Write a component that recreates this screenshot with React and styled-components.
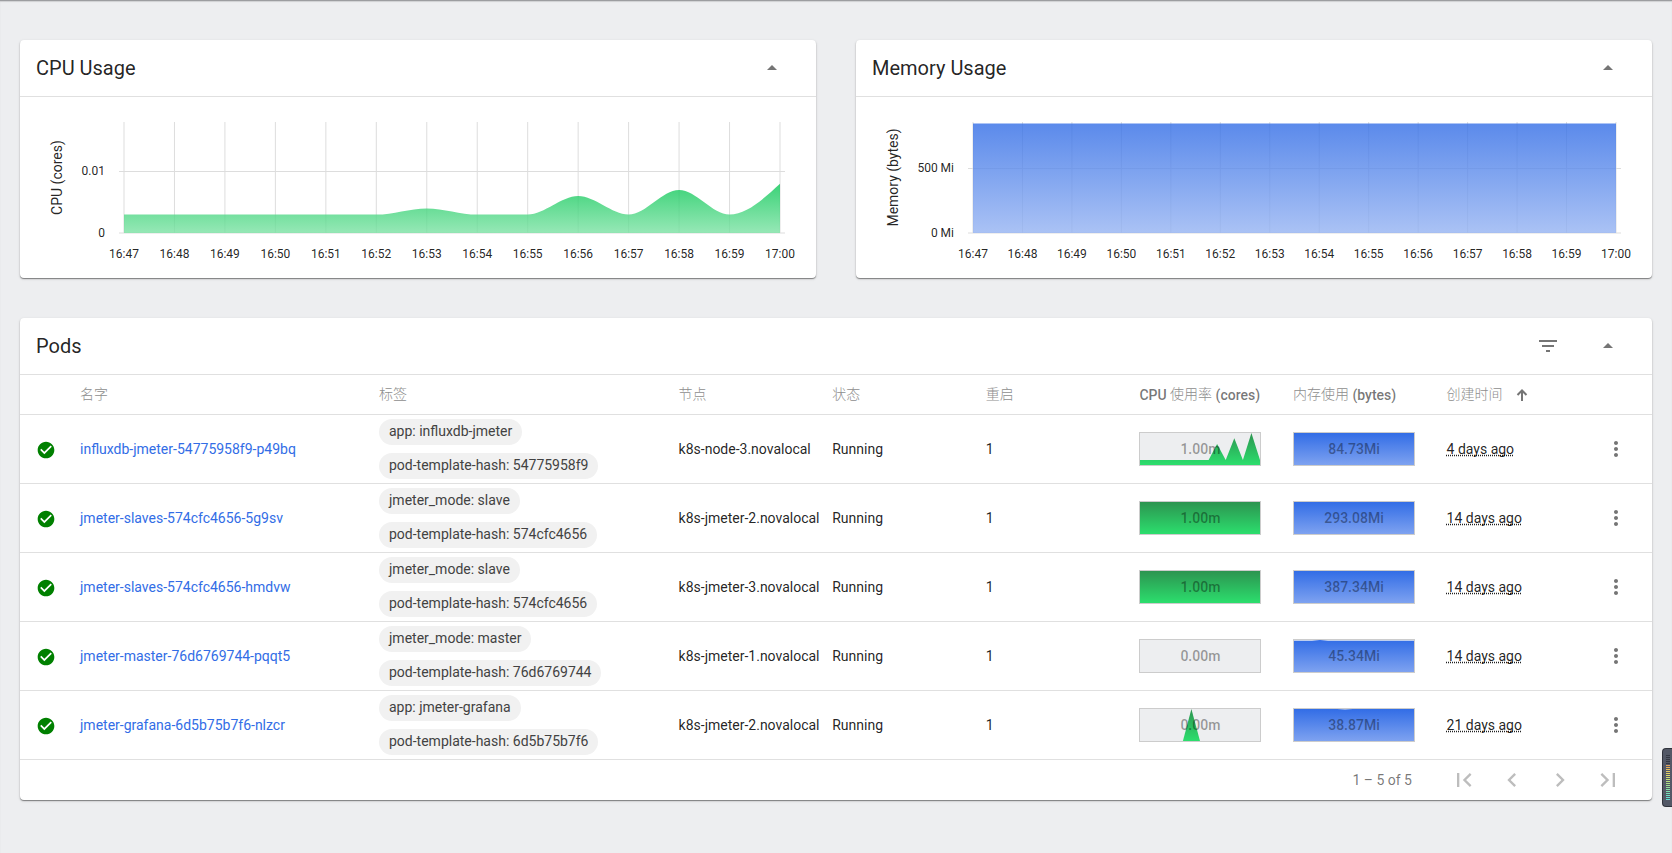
import React from 'react';
import styled, { createGlobalStyle } from 'styled-components';

const GlobalStyle = createGlobalStyle`
  body {
    margin: 0;
    background-color: #edeef0;
    color: rgba(0, 0, 0, 0.87);
    font-family: Roboto, "Noto Sans CJK SC", sans-serif;
    font-size: 14px;
    overflow: hidden;
  }
`

const Page = styled.div`
  box-sizing: border-box;
  height: 853px;
  padding: 40px 20px 0;
  box-shadow: inset 0 1px 0 #9c9da0, inset 0 2px 1px #cfd0d2;
`

const Charts = styled.div`
  display: grid;
  grid-template-columns: 1fr 1fr;
  gap: 40px;
  margin-bottom: 40px;
`

const Card = styled.section`
  background-color: white;
  border-radius: 4px;
  box-shadow: 0 1px 1px rgba(0, 0, 0, 0.4), 0 1px 3px rgba(0, 0, 0, 0.16);
`

const CardHeader = styled.header`
  display: flex;
  align-items: center;
  height: 56px;
  padding: 0 32px 0 16px;
  border-bottom: 1px solid #e0e0e0;
`

const Title = styled.h2`
  flex: 1;
  margin: 0;
  font-size: 20px;
  font-weight: 400;
  line-height: 24px;
`

const HeaderIcon = styled.svg`
  display: block;
  width: 24px;
  height: 24px;
  margin-left: 36px;
  fill: #757575;
`

const ChartSvg = styled.svg`
  display: block;
  width: 796px;
  height: 181px;
`

const Tick = styled.text`
  fill: rgba(0, 0, 0, 0.87);
  font-size: 12px;
`

const AxisTitle = styled.text`
  fill: rgba(0, 0, 0, 0.87);
  font-size: 14px;
  text-anchor: middle;
`

const Row = styled.div`
  box-sizing: border-box;
  display: grid;
  grid-template-columns: 60px 299px 299.6px repeat(6, 153.6px) 1fr;
  align-items: center;
  height: ${props => props.$head ? 40 : 69}px;
  border-bottom: 1px solid #e0e0e0;
  color: ${props => props.$head ? "rgba(0, 0, 0, 0.54)" : "inherit"};
  font-weight: ${props => props.$head ? 500 : 400};
  white-space: nowrap;
`

const HeadCell = styled.div`
  display: flex;
  align-items: center;
`

const Han = styled.span`
  padding-bottom: 3px;
  color: #8e8e8e;
  font-family: "Noto Sans CJK SC", sans-serif;
  font-weight: 300;
  line-height: 20px;
`

const SortIcon = styled.svg`
  width: 12px;
  height: 12px;
  margin-left: 13px;
  fill: none;
  stroke: #757575;
  stroke-width: 2;
`

const StatusIcon = styled.svg`
  display: block;
  width: 20px;
  height: 20px;
  margin: 2px 0 0 16px;
  fill: #008000;
`

const PodLink = styled.a`
  color: #326de6;
`

const Chips = styled.div`
  display: flex;
  flex-direction: column;
  align-items: flex-start;
  gap: 8px;
`

const Chip = styled.span`
  height: 26px;
  padding: 0 10px;
  border-radius: 13px;
  background-color: #f1f1f1;
  color: #424242;
  line-height: 25px;
`

const Spark = styled.div`
  position: relative;
  box-sizing: border-box;
  width: 122px;
  height: 34px;
  border: 1px solid #cccccc;
  background-color: #edeef0;
`

const SparkSvg = styled.svg`
  display: block;
  width: 120px;
  height: 32px;
`

const SparkValue = styled.span`
  position: absolute;
  inset: 0;
  color: rgba(0, 0, 0, 0.38);
  font-weight: 500;
  line-height: 32px;
  text-align: center;
`

const Age = styled.span`
  text-decoration: underline dotted;
  text-decoration-skip-ink: none;
`

const MenuIcon = styled.svg`
  display: block;
  width: 24px;
  height: 24px;
  margin-left: 4px;
  fill: #757575;
`

const Pager = styled.footer`
  display: flex;
  align-items: center;
  justify-content: flex-end;
  height: 40px;
  padding-right: 30px;
  color: rgba(0, 0, 0, 0.54);
`

const PagerIcon = styled.svg`
  width: 28px;
  height: 28px;
  margin-left: 20px;
  fill: #bdbdbd;

  &:first-of-type {
    margin-left: 38px;
  }
`

const Meter = styled.div`
  position: absolute;
  box-sizing: border-box;
  top: 748px;
  right: 0;
  width: 10px;
  height: 59px;
  padding: 6px 0 0 3px;
  border: 1px solid #30333c;
  border-right: none;
  border-radius: 4px 0 0 4px;
  background-color: #535866;
`

const MeterBar = styled.div`
  height: 1px;
  margin-bottom: 1px;
  width: 4px;
  background-color: ${props => props.color};
`

const TIMES = [
  "16:47", "16:48", "16:49", "16:50", "16:51", "16:52", "16:53",
  "16:54", "16:55", "16:56", "16:57", "16:58", "16:59", "17:00"
]

const CPU = [3, 3, 3, 3, 3, 3, 4, 3, 3, 6, 3, 7, 3, 8]
const MEMORY = [842, 842, 842, 842, 842, 842, 842, 842, 842, 842, 842, 842, 842, 842]

const FULL = "0,0 120,0 120,32 0,32"

const PODS = [
  {
    name: "influxdb-jmeter-54775958f9-p49bq",
    labels: ["app: influxdb-jmeter", "pod-template-hash: 54775958f9"],
    node: "k8s-node-3.novalocal",
    cpu: "1.00m",
    cpuShape: "0,27 68.6,27 77.1,11 85.7,27 94.3,5.3 102.9,27 111.4,0 120,27 120,32 0,32",
    memory: "84.73Mi",
    age: "4 days ago"
  },
  {
    name: "jmeter-slaves-574cfc4656-5g9sv",
    labels: ["jmeter_mode: slave", "pod-template-hash: 574cfc4656"],
    node: "k8s-jmeter-2.novalocal",
    cpu: "1.00m",
    cpuShape: FULL,
    memory: "293.08Mi",
    age: "14 days ago"
  },
  {
    name: "jmeter-slaves-574cfc4656-hmdvw",
    labels: ["jmeter_mode: slave", "pod-template-hash: 574cfc4656"],
    node: "k8s-jmeter-3.novalocal",
    cpu: "1.00m",
    cpuShape: FULL,
    memory: "387.34Mi",
    age: "14 days ago"
  },
  {
    name: "jmeter-master-76d6769744-pqqt5",
    labels: ["jmeter_mode: master", "pod-template-hash: 76d6769744"],
    node: "k8s-jmeter-1.novalocal",
    cpu: "0.00m",
    cpuShape: "",
    memory: "45.34Mi",
    memoryShape: "0,0.7 18,0.7 26,0 34,0.7 120,0.7 120,32 0,32",
    age: "14 days ago"
  },
  {
    name: "jmeter-grafana-6d5b75b7f6-nlzcr",
    labels: ["app: jmeter-grafana", "pod-template-hash: 6d5b75b7f6"],
    node: "k8s-jmeter-2.novalocal",
    cpu: "0.00m",
    cpuShape: "42.9,32 51.4,0 60,32",
    memory: "38.87Mi",
    memoryShape: "0,0 43,0 51,0.6 59,0 120,0 120,32 0,32",
    age: "21 days ago"
  }
]

const METER_COLORS = [
  "#343843", "#343843", "#343843", "#343843", "#343843",
  "#e0a05c", "#e3b05c", "#e3bd5f", "#e2c962", "#e0d266", "#d9d86b", "#cfdb70",
  "#c3dd76", "#b6de7d", "#aadf85", "#9ddf8e", "#91df98", "#86dfa3",
  "#7cdfae", "#74dfb8", "#6cdfc2", "#66dfcb", "#60dfd3"
]

// Monotone cubic through evenly spaced points
function curve(points) {
  const slopes = points.map((p, i) => {
    if (i === 0) return 0
    const before = points[i][1] - points[i - 1][1]
    if (i === points.length - 1) return before * 1.5
    const after = points[i + 1][1] - points[i][1]
    return before * after <= 0 ? 0 : (before + after) / 2
  })
  return points.map(([x, y], i) => {
    if (i === 0) return `M${x},${y}`
    const [px, py] = points[i - 1]
    const dx = (x - px) / 3
    return `C${px + dx},${py + slopes[i - 1] / 3} ${x - dx},${y - slopes[i] / 3} ${x},${y}`
  }).join(" ")
}

function Chart({ id, title, titleX, left, right, values, unit, ticks, colors }) {
  const base = 136
  const step = (right - left) / (values.length - 1)
  const points = values.map((value, i) => [left + i * step, base - value * unit])
  const top = Math.min(...points.map(point => point[1]))

  return (
    <ChartSvg>
      <defs>
        <linearGradient id={id} gradientUnits="userSpaceOnUse" x1="0" y1={top} x2="0" y2={base}>
          <stop offset="0" stopColor={colors[0]} />
          <stop offset="1" stopColor={colors[1]} />
        </linearGradient>
      </defs>
      <g stroke="#dddddd">
        {points.map(([x]) => <line key={x} x1={x} x2={x} y1="25" y2={base} />)}
        {ticks.map(tick => (
          <line key={tick.label} x1={left - 5} x2={right + 5} y1={tick.y} y2={tick.y} />
        ))}
      </g>
      <path d={`${curve(points)} V${base} H${left} Z`} fill={`url(#${id})`} fillOpacity="0.8" />
      {ticks.map(tick => (
        <Tick key={tick.label} x={left - 19} y={Math.floor(tick.y) + 4} textAnchor="end">{tick.label}</Tick>
      ))}
      {points.map(([x], i) => (
        <Tick key={TIMES[i]} x={x} y="161" textAnchor="middle">{TIMES[i]}</Tick>
      ))}
      <AxisTitle transform={`translate(${titleX}, 80.5) rotate(-90)`}>{title}</AxisTitle>
    </ChartSvg>
  )
}

function Sparkline({ id, shape, colors, value }) {
  return (
    <Spark>
      <SparkSvg viewBox="0 0 120 32">
        <defs>
          <linearGradient id={id} gradientUnits="userSpaceOnUse" x1="0" y1="0" x2="0" y2="32">
            <stop offset="0" stopColor={colors[0]} />
            <stop offset="1" stopColor={colors[1]} />
          </linearGradient>
        </defs>
        <polygon points={shape} fill={`url(#${id})`} />
      </SparkSvg>
      <SparkValue>{value}</SparkValue>
    </Spark>
  )
}

const Collapse = () => (
  <HeaderIcon viewBox="0 0 24 24"><path d="M7 14l5-5 5 5z" /></HeaderIcon>
)

function App() {
  return (
    <Page>
      <GlobalStyle />
      <Charts>
        <Card>
          <CardHeader>
            <Title>CPU Usage</Title>
            <Collapse />
          </CardHeader>
          <Chart
            id="cpu-area"
            title="CPU (cores)"
            titleX={41.5}
            left={104}
            right={760}
            values={CPU}
            unit={6.15}
            ticks={[{ label: "0.01", y: 74.5 }, { label: "0", y: 136 }]}
            colors={["#0bc756", "#7ce2a4"]}
          />
        </Card>
        <Card>
          <CardHeader>
            <Title>Memory Usage</Title>
            <Collapse />
          </CardHeader>
          <Chart
            id="memory-area"
            title="Memory (bytes)"
            titleX={41.5}
            left={117}
            right={760}
            values={MEMORY}
            unit={0.13}
            ticks={[{ label: "500 Mi", y: 71.5 }, { label: "0 Mi", y: 136 }]}
            colors={["#326de6", "#95b3f2"]}
          />
        </Card>
      </Charts>
      <Card>
        <CardHeader>
          <Title>Pods</Title>
          <HeaderIcon viewBox="0 0 24 24">
            <path d="M10 18h4v-2h-4v2zM3 6v2h18V6H3zm3 7h12v-2H6v2z" />
          </HeaderIcon>
          <Collapse />
        </CardHeader>
        <Row $head>
          <span />
          <HeadCell><Han>名字</Han></HeadCell>
          <HeadCell><Han>标签</Han></HeadCell>
          <HeadCell><Han>节点</Han></HeadCell>
          <HeadCell><Han>状态</Han></HeadCell>
          <HeadCell><Han>重启</Han></HeadCell>
          <HeadCell>CPU&nbsp;<Han>使用率</Han>&nbsp;(cores)</HeadCell>
          <HeadCell><Han>内存使用</Han>&nbsp;(bytes)</HeadCell>
          <HeadCell>
            <Han>创建时间</Han>
            <SortIcon viewBox="0 0 12 12"><path d="M6 12V2M1.5 6L6 1.5 10.5 6" /></SortIcon>
          </HeadCell>
        </Row>
        {PODS.map((pod, i) => (
          <Row key={pod.name}>
            <StatusIcon viewBox="0 0 24 24">
              <path d="M12 2C6.48 2 2 6.48 2 12s4.48 10 10 10 10-4.48 10-10S17.52 2 12 2zm-2 15l-5-5 1.41-1.41L10 14.17l7.59-7.59L19 8l-9 9z" />
            </StatusIcon>
            <PodLink>{pod.name}</PodLink>
            <Chips>
              {pod.labels.map(label => <Chip key={label}>{label}</Chip>)}
            </Chips>
            <span>{pod.node}</span>
            <span>Running</span>
            <span>1</span>
            <Sparkline id={`pod-cpu-${i}`} shape={pod.cpuShape} colors={["#2c9450", "#2cde6d"]} value={pod.cpu} />
            <Sparkline id={`pod-mem-${i}`} shape={pod.memoryShape || FULL} colors={["#326de6", "#7ea2f0"]} value={pod.memory} />
            <Age>{pod.age}</Age>
            <MenuIcon viewBox="0 0 24 24">
              <path d="M12 8c1.1 0 2-.9 2-2s-.9-2-2-2-2 .9-2 2 .9 2 2 2zm0 2c-1.1 0-2 .9-2 2s.9 2 2 2 2-.9 2-2-.9-2-2-2zm0 6c-1.1 0-2 .9-2 2s.9 2 2 2 2-.9 2-2-.9-2-2-2z" />
            </MenuIcon>
          </Row>
        ))}
        <Pager>
          <span>1 – 5 of 5</span>
          <PagerIcon viewBox="0 0 24 24">
            <path d="M18.41 16.59L13.82 12l4.59-4.59L17 6l-6 6 6 6zM6 6h2v12H6z" />
          </PagerIcon>
          <PagerIcon viewBox="0 0 24 24">
            <path d="M15.41 7.41L14 6l-6 6 6 6 1.41-1.41L10.83 12z" />
          </PagerIcon>
          <PagerIcon viewBox="0 0 24 24">
            <path d="M10 6L8.59 7.41 13.17 12l-4.58 4.59L10 18l6-6z" />
          </PagerIcon>
          <PagerIcon viewBox="0 0 24 24">
            <path d="M5.59 7.41L10.18 12l-4.59 4.59L7 18l6-6-6-6zM16 6h2v12h-2z" />
          </PagerIcon>
        </Pager>
      </Card>
      <Meter>
        {METER_COLORS.map((color, i) => <MeterBar key={i} color={color} />)}
      </Meter>
    </Page>
  )
}

export default App
